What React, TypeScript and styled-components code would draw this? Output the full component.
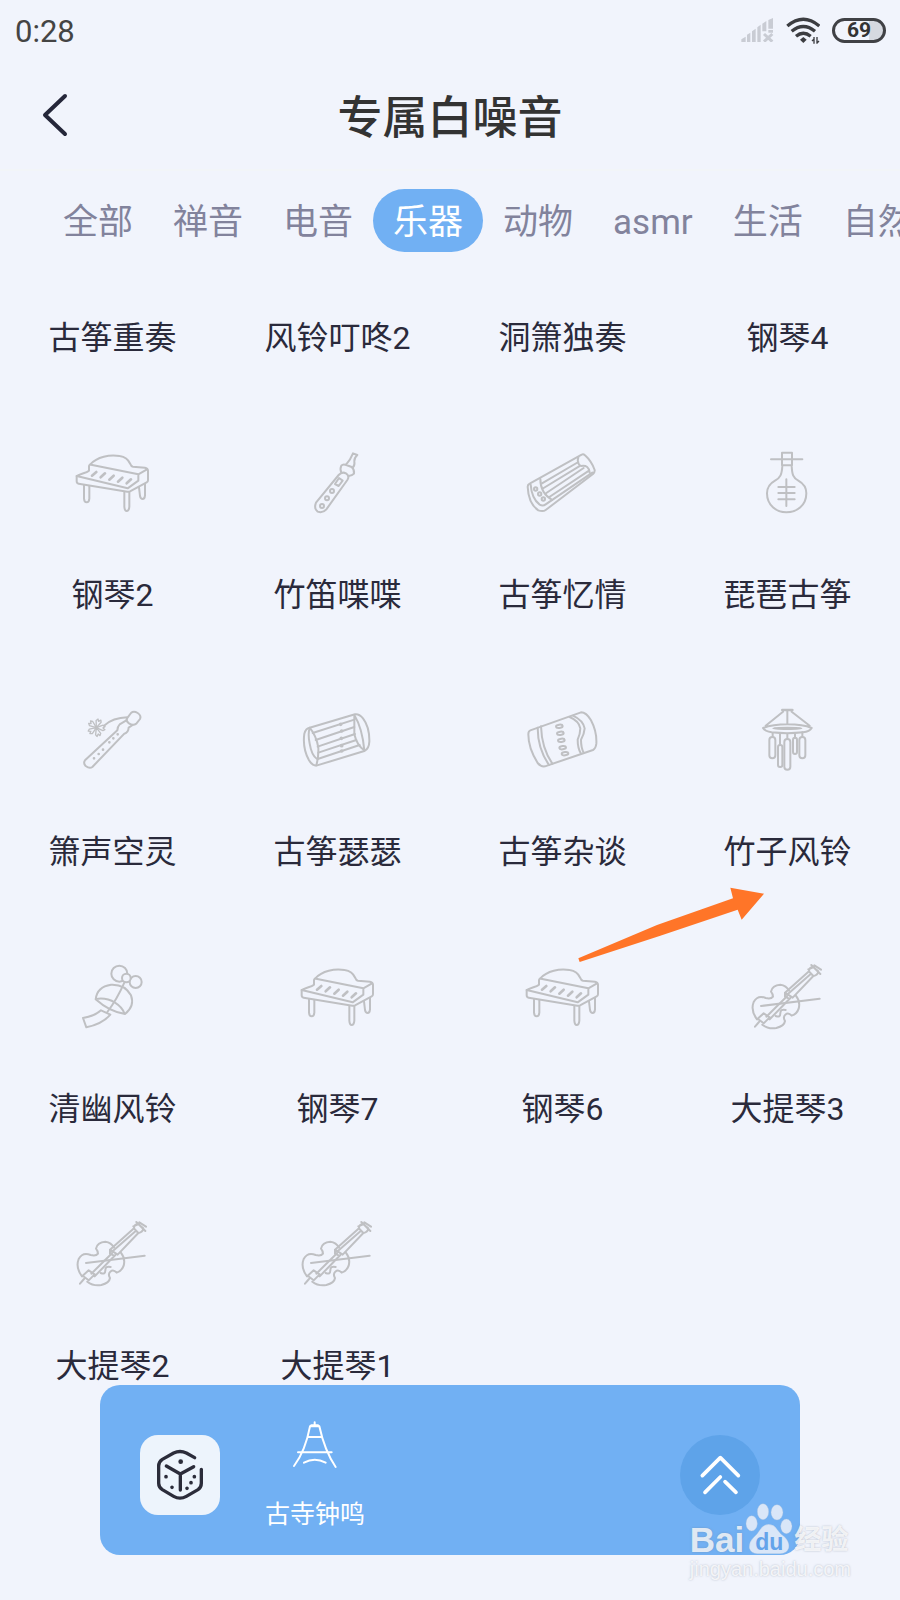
import React from 'react';
import styled, { createGlobalStyle } from 'styled-components';

const GlobalStyle = createGlobalStyle`
  * { box-sizing: border-box; }
  body {
    margin: 0;
    background: #f1f4fc;
    font-family: Roboto, "Noto Sans CJK SC", sans-serif;
  }
  button {
    border: 0;
    padding: 0;
    margin: 0;
    background: none;
    font: inherit;
    color: inherit;
    cursor: pointer;
  }
  svg { display: block; }
`;

const Page = styled.div`
  position: relative;
  min-height: 100vh;
  padding-bottom: 45px;
  overflow: hidden;
  background: #f1f4fc;
`;

const StatusBar = styled.div`
  display: flex;
  align-items: center;
  justify-content: space-between;
  height: 60px;
  padding: 0 14px 0 15px;
  color: #444;
  font-size: 31px;
  line-height: 36px;
`;

const Clock = styled.span`
  padding-top: 3px;
`;

const StatusIcons = styled.div`
  display: flex;
  align-items: center;
  gap: 12px;
`;

const Battery = styled.div`
  display: flex;
  align-items: center;
  justify-content: center;
  width: 54px;
  height: 25px;
  border: 3px solid #404145;
  border-radius: 13px;
  background: linear-gradient(to right, #f1f4fc 70%, #d6d9e0 70%);
  color: #333;
  font-size: 21px;
  font-weight: 700;
  line-height: 20px;
`;

const Header = styled.header`
  display: grid;
  grid-template-columns: 110px 1fr 110px;
  align-items: center;
  height: 111px;
  border-bottom: 2px solid #f2f5f8;
`;

const BackButton = styled.button`
  display: flex;
  justify-content: center;
  align-items: center;
  height: 80px;
`;

const Title = styled.h1`
  margin: 0;
  padding-top: 8px;
  color: #333;
  font-size: 45px;
  font-weight: 500;
  line-height: 60px;
  text-align: center;
`;

const Tabs = styled.nav`
  display: flex;
  padding: 18px 0 0 43px;
  overflow: hidden;
`;

const Tab = styled.button<{ $active?: boolean }>`
  flex: none;
  height: 63px;
  padding: 4px 20px 0;
  border-radius: 32px;
  background: ${(p) => (p.$active ? '#71b0f3' : 'transparent')};
  color: ${(p) => (p.$active ? '#fff' : '#82839c')};
  font-size: 35px;
  line-height: 59px;
`;

const Grid = styled.main`
  display: grid;
  grid-template-columns: repeat(4, 1fr);
  padding-top: 66px;
`;

const Sound = styled.button`
  position: relative;
  display: flex;
  flex-direction: column;
  align-items: center;
  color: #2a2a3b;
`;

const IconBox = styled.span`
  width: 92px;
  margin: 79px 0 48px;
`;

const SoundName = styled.span`
  font-size: 32px;
  line-height: 40px;
  white-space: nowrap;
`;

const Pointer = styled.span`
  position: absolute;
  top: 100%;
  right: 50%;
  z-index: 1;
  padding: 15px 23px 0 0;
`;

const Player = styled.section`
  display: flex;
  align-items: center;
  height: 170px;
  margin: -1px 100px 0;
  padding: 10px 40px 0;
  border-radius: 20px;
  background: #71b0f3;
`;

const DiceButton = styled.button`
  display: flex;
  align-items: center;
  justify-content: center;
  width: 80px;
  height: 80px;
  border-radius: 18px;
  background: #edf4fc;
`;

const Track = styled.div`
  display: flex;
  flex-direction: column;
  align-items: center;
  gap: 33px;
  margin-left: 45px;
  color: #fff;
  font-size: 25px;
  line-height: 30px;
`;

const ExpandButton = styled.button`
  display: flex;
  align-items: center;
  justify-content: center;
  width: 80px;
  height: 80px;
  margin-left: auto;
  border-radius: 50%;
  background: #5ea3e9;
`;

const Watermark = styled.div`
  position: absolute;
  right: 49px;
  bottom: 19px;
  display: flex;
  flex-direction: column;
  align-items: flex-start;
  color: rgba(255, 255, 255, 0.8);
  font-family: "Liberation Sans", "Noto Sans CJK SC", sans-serif;
  text-shadow: 0 0 2px rgba(120, 130, 150, 0.5);
  pointer-events: none;
`;

const Brand = styled.div`
  display: flex;
  align-items: flex-end;
  height: 54px;
  font-size: 35px;
  font-weight: 700;
  line-height: 34px;
`;

const BrandSuffix = styled.span`
  font-size: 27px;
`;

const Paw = styled.span`
  position: relative;
  width: 50px;
  height: 54px;
`;

const PawText = styled.span`
  position: absolute;
  left: 0;
  right: 0;
  bottom: 2px;
  color: #64a3ea;
  font-size: 23px;
  line-height: 26px;
  text-align: center;
  text-shadow: none;
`;

const SiteName = styled.div`
  font-size: 20px;
  line-height: 24px;
`;

type IconName =
  | 'piano' | 'flute' | 'guzheng' | 'pipa' | 'xiao' | 'zither'
  | 'drum' | 'chime' | 'bell' | 'violin';

const icons: Record<IconName, { box: string; art: React.ReactNode }> = {
  piano: {
    box: '22 -9 270 270',
    art: (
      <>
        <path d="M88 92V79Q88 73 94 74L236 103L262 88M236 103V122L204 145L51 108C62 101 80 99 88 92" />
        <path d="M51 108V124Q51 130 57 131L203 155Q207 156 211 154L261 127Q265 125 265 121V92Q264 84 256 83L220 80Q214 79 212 72C205 56 196 50 180 48C150 43 112 50 92 73" />
        <path strokeWidth="8" d="M97 107L110 96M123 112L136 100M149 119L162 107M175 125L188 113M201 130L214 118" />
        <path d="M73 136V176Q74 187 81 187Q88 187 89 176V138M194 157V200Q195 213 201 213Q208 213 209 200V157M238 142L241 168Q243 177 249 177Q255 177 256 166V132" />
      </>
    ),
  },
  flute: {
    box: '697 -9 270 270',
    art: (
      <>
        <path d="M769 188L837 105Q847 94 859 100Q871 108 863 120L800 208Q790 220 774 215Q762 206 769 188Z" />
        <circle cx="787" cy="198" r="6" /><circle cx="802" cy="175" r="6" /><circle cx="817" cy="153" r="6" />
        <path d="M826 132L838 114L849 122L837 138Z" />
        <path d="M845 98Q840 87 845 77Q850 71 860 75L876 81Q885 89 883 101Q878 107 867 108M859 74Q873 58 880 40L893 45Q883 54 884 64Q886 75 880 82" />
      </>
    ),
  },
  guzheng: {
    box: '22 -9 270 270',
    art: (
      <>
        <path d="M54 140Q54 134 60 131L216 44Q221 41 226 46Q246 64 255 90Q256 96 250 102L108 210Q100 216 86 211Q56 190 54 140Z" />
        <path d="M63 134Q66 176 90 194Q100 199 108 193L248 98M92 117Q92 160 128 180" />
        <path d="M97 130L206 66M102 144L212 77M110 159L222 84M119 171L238 92M206 52Q200 70 214 78Q238 74 240 98" />
        <circle cx="78" cy="147" r="5" /><circle cx="90" cy="162" r="5" /><circle cx="101" cy="177" r="5" />
      </>
    ),
  },
  pipa: {
    box: '697 -9 270 270',
    art: (
      <>
        <path d="M817 38H847V76H817ZM784 58H878M818 76C817 104 812 113 796 122C778 132 772 148 772 160C772 196 800 217 830 217C862 217 890 196 890 160C890 148 884 132 866 122C850 113 847 104 846 76" />
        <path d="M830 118V198M806 141H855M806 159H855M806 178H855" />
      </>
    ),
  },
  xiao: {
    box: '22 -3 270 270',
    art: (
      <>
        <path d="M200 76L180 88Q174 94 173 106L76 196Q70 204 78 213Q90 222 98 216L194 116Q206 113 207 98L219 90" />
        <path d="M202 70L214 54Q222 47 234 54Q246 62 241 72L230 86Q220 93 208 85Q198 78 202 70ZM133 92Q160 68 203 67" />
        {[20, 92, 164, 236, 308].map((a) => (
          <path key={a} strokeWidth="4" transform={`translate(110 98) rotate(${a})`} d="M0 0L-8 -20L-4 -26L0 -20L5 -26L8 -20Z" />
        ))}
        <path strokeWidth="8" d="M103 190h.1M117 177h.1M130 164h.1M149 142h.1M161 130h.1M174 118h.1" />
      </>
    ),
  },
  zither: {
    box: '697 -3 270 270',
    art: (
      <>
        <path d="M750 98L886 58Q898 56 910 70Q930 96 929 140Q928 162 914 168L770 212Q758 212 748 196Q728 160 734 116Q738 100 750 98Z" />
        <path d="M750 98Q770 122 776 158Q777 190 770 210M750 99Q744 116 750 146Q756 182 772 192M884 60Q908 100 914 166M884 60V118Q892 152 914 166" />
        <path d="M759 114L884 74M768 135L884 96M774 155L886 117M776 173L890 135M774 192L900 150" />
        <path strokeWidth="11" d="M843 88h.1M846 108h.1M845 130h.1M846 152h.1M846 168h.1" />
      </>
    ),
  },
  drum: {
    box: '22 -3 270 270',
    art: (
      <>
        <path d="M62 106L214 52Q230 52 244 76Q262 110 260 146Q258 161 250 165L106 214Q94 216 84 204Q56 160 56 118Q56 108 62 106Z" />
        <path d="M84 98Q84 160 118 210M94 94Q96 160 128 206M180 66Q208 78 212 100Q212 116 204 134Q204 160 214 176M190 62Q220 76 225 100Q224 116 214 134Q214 158 222 173" />
        {[[149, 94], [152, 115], [155, 136], [159, 158], [166, 176]].map(([x, y]) => (
          <ellipse key={y} cx={x} cy={y} rx="10" ry="5" transform={`rotate(-8 ${x} ${y})`} />
        ))}
      </>
    ),
  },
  chime: {
    box: '697 -3 270 270',
    art: (
      <>
        <path strokeWidth="8" d="M818 45H848" />
        <path d="M833 48V86M820 50L768 92M846 50L900 92M760 99Q790 88 833 88Q880 88 906 99Q900 110 880 112Q833 117 786 112Q766 109 760 99Z" />
        <ellipse cx="833" cy="100" rx="42" ry="2" />
        <path d="M789 114V126M811 116V150M833 116V132M856 114V128M878 112V126" />
        <rect x="779" y="126" width="18" height="64" rx="9" />
        <rect x="805" y="150" width="13" height="66" rx="6" />
        <rect x="824" y="132" width="18" height="92" rx="9" />
        <rect x="850" y="128" width="12" height="49" rx="6" />
        <rect x="869" y="126" width="18" height="64" rx="9" />
      </>
    ),
  },
  bell: {
    box: '22 3 270 270',
    art: (
      <>
        <circle cx="179" cy="71" r="24" /><circle cx="228" cy="96" r="18" />
        <circle cx="200" cy="84" r="13" fill="#f1f4fc" />
        <path d="M108 148Q112 110 154 104Q196 102 214 136Q226 168 196 192Q150 186 108 148ZM109 147Q140 142 166 158Q188 172 194 190M194 98Q172 148 143 186" />
        <path d="M124 181L152 194Q128 222 80 232L70 204Q104 199 124 181Z" />
      </>
    ),
  },
  violin: {
    box: '697 243 270 270',
    art: (
      <>
        <path d="M742 448Q722 422 732 396Q744 374 768 384Q784 388 790 380Q790 372 784 365Q788 345 812 344Q830 346 838 362M858 376Q873 394 867 416Q862 432 846 437Q836 426 827 434Q819 442 826 453Q824 468 800 474Q776 478 758 464" />
        <path d="M826 368L898 304L911 318L849 383ZM832 374L904 311M826 368V380L838 386M832 379L770 440M842 384L780 448M744 446L762 430L780 442L762 460ZM748 456L736 470" />
        <path d="M754 408L930 386M798 438Q812 444 812 430Q812 416 828 420M898 304Q898 292 910 291L926 304Q924 316 911 318M905 285L932 312M914 286L934 299M896 298L912 291" />
      </>
    ),
  },
};

const SoundIcon = ({ name }: { name: IconName }) => (
  <svg width="90" height="90" viewBox={icons[name].box} fill="none" stroke="#bfc0c3" strokeWidth="6" strokeLinecap="round" strokeLinejoin="round" aria-hidden="true">
    {icons[name].art}
  </svg>
);

const tabs = ['全部', '禅音', '电音', '乐器', '动物', 'asmr', '生活', '自然'];

const sounds: { name: string; icon?: IconName; pointed?: boolean }[] = [
  { name: '古筝重奏' },
  { name: '风铃叮咚2' },
  { name: '洞箫独奏' },
  { name: '钢琴4' },
  { name: '钢琴2', icon: 'piano' },
  { name: '竹笛喋喋', icon: 'flute' },
  { name: '古筝忆情', icon: 'guzheng' },
  { name: '琵琶古筝', icon: 'pipa' },
  { name: '箫声空灵', icon: 'xiao' },
  { name: '古筝瑟瑟', icon: 'zither' },
  { name: '古筝杂谈', icon: 'drum' },
  { name: '竹子风铃', icon: 'chime', pointed: true },
  { name: '清幽风铃', icon: 'bell' },
  { name: '钢琴7', icon: 'piano' },
  { name: '钢琴6', icon: 'piano' },
  { name: '大提琴3', icon: 'violin' },
  { name: '大提琴2', icon: 'violin' },
  { name: '大提琴1', icon: 'violin' },
];

export default function App() {
  return (
    <Page lang="zh-CN">
      <GlobalStyle />
      <StatusBar>
        <Clock>0:28</Clock>
        <StatusIcons>
          <svg width="33" height="24" viewBox="35 22 99 72" fill="#c9ccd4" aria-hidden="true">
            <path d="M36 94V86L49 78V94ZM53 94V72L63 66V94ZM68 94V62L79 54V94ZM84 94V50L94 42V94ZM99 62V39L111 31V62ZM117 54V28L131 22V54ZM117 58H131V66H117Z" />
            <path d="M104 70L129 93M129 70L104 93" stroke="#c9ccd4" strokeWidth="9" />
          </svg>
          <svg width="34" height="27" viewBox="168 20 102 81" fill="none" stroke="#3c3d41" strokeWidth="10" aria-hidden="true">
            <path d="M172 47Q220 6 268 47M185 63Q220 34 255 63M198 78Q220 60 242 78" />
            <path d="M220 80L230 88L220 98L210 88Z" fill="#3c3d41" stroke="none" />
            <path strokeWidth="4" d="M246 92L252 86V100M252 80V100M261 100V80M261 98L267 92" />
          </svg>
          <Battery>69</Battery>
        </StatusIcons>
      </StatusBar>

      <Header>
        <BackButton aria-label="返回">
          <svg width="28" height="44" viewBox="0 0 28 44" fill="none" stroke="#25273a" strokeWidth="4" strokeLinecap="round" strokeLinejoin="round">
            <path d="M24 3L4 22L24 41" />
          </svg>
        </BackButton>
        <Title>专属白噪音</Title>
      </Header>

      <Tabs>
        {tabs.map((t) => (
          <Tab key={t} $active={t === '乐器'}>{t}</Tab>
        ))}
      </Tabs>

      <Grid>
        {sounds.map((s) => (
          <Sound key={s.name}>
            {s.icon && <IconBox><SoundIcon name={s.icon} /></IconBox>}
            <SoundName>{s.name}</SoundName>
            {s.pointed && (
              <Pointer>
                <svg width="187" height="76" viewBox="203 50 561 228" fill="#ff7528" aria-hidden="true">
                  <path d="M204 264L440 164L668 84L660 52L761 70L694 148L682 118L450 196L208 275Z" />
                </svg>
              </Pointer>
            )}
          </Sound>
        ))}
      </Grid>

      <Player>
        <DiceButton aria-label="随机播放">
          <svg width="48" height="54" viewBox="199 234 144 162" fill="none" stroke="#2b2c3a" strokeWidth="10" strokeLinecap="round" strokeLinejoin="round">
            <path d="M315 263L290 249Q271 240 252 249L218 268Q207 275 207 288V340Q207 352 218 359L252 379Q271 390 290 379L325 359Q335 352 335 340V298M230 288L272 312L312 290M272 312V360" />
            <path strokeWidth="14" d="M273 275h.1" />
            <path strokeWidth="11" d="M229 320h.1M247 352h.1M314 320h.1M304 338h.1M292 355h.1" />
          </svg>
        </DiceButton>
        <Track>
          <svg width="46" height="46" viewBox="606 150 138 138" overflow="visible" fill="none" stroke="#fff" strokeWidth="6" strokeLinecap="round" strokeLinejoin="round" aria-hidden="true">
            <path d="M612 285Q646 240 660 166L664 163H684L688 166Q704 240 737 288M674 154V163M656 198H693M624 244H725M642 275Q674 258 707 275M662 166H686" />
          </svg>
          <span>古寺钟鸣</span>
        </Track>
        <ExpandButton aria-label="展开">
          <svg width="48" height="48" viewBox="166 243 144 144" fill="none" stroke="#fff" strokeWidth="11" strokeLinecap="round" strokeLinejoin="round">
            <path d="M185 317L239 263L293 317M193 367L239 321M253 335L286 367" />
          </svg>
        </ExpandButton>
      </Player>

      <Watermark>
        <Brand>
          <span>Bai</span>
          <Paw>
            <svg width="50" height="52" viewBox="312 400 150 156" fill="#d9e6f8" stroke="#a9bfdc" strokeWidth="1" aria-hidden="true">
              <ellipse cx="335" cy="461" rx="17" ry="23" />
              <ellipse cx="369" cy="426" rx="17" ry="24" />
              <ellipse cx="411" cy="428" rx="18" ry="23" />
              <ellipse cx="439" cy="470" rx="17" ry="22" />
              <path d="M386 464Q402 464 412 480Q420 492 434 502Q450 518 446 536Q440 552 420 552H352Q334 552 328 536Q326 518 340 504Q352 494 360 480Q370 464 386 464Z" />
            </svg>
            <PawText>du</PawText>
          </Paw>
          <BrandSuffix>经验</BrandSuffix>
        </Brand>
        <SiteName>jingyan.baidu.com</SiteName>
      </Watermark>
    </Page>
  );
}
